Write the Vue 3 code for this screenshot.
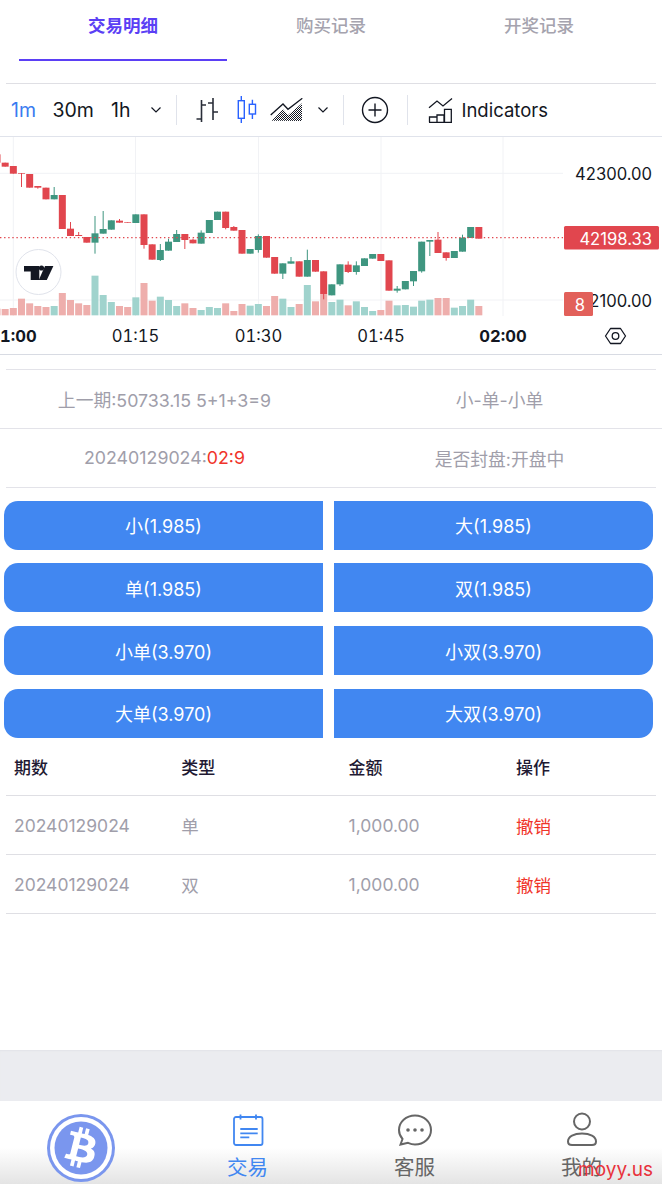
<script setup>
// candles: [colour, bodyTop, bodyBottom, wickTop, wickBottom, volumeTop] in 3x chart coords
const raw = [
  ['r', 55, 80, 55, 80, 518], ['r', 80, 92, 80, 92, 519], ['r', 90, 113, 90, 113, 516], ['r', 111, 113, 111, 153, 488],
  ['r', 114, 155, 114, 155, 502], ['r', 150, 155, 150, 158, 510], ['r', 155, 190, 155, 190, 513], ['g', 177, 190, 153, 190, 510],
  ['r', 177, 279, 177, 279, 471], ['r', 278, 300, 258, 300, 492], ['r', 297, 300, 288, 300, 502], ['r', 303, 320, 303, 320, 507],
  ['g', 292, 320, 240, 353, 419], ['g', 279, 293, 225, 293, 477], ['g', 253, 281, 253, 281, 498], ['r', 254, 260, 249, 260, 510],
  ['r', 258, 260, 258, 260, 513], ['g', 235, 261, 235, 261, 484], ['r', 235, 327, 235, 338, 441], ['r', 325, 371, 325, 371, 494],
  ['g', 342, 372, 324, 375, 482], ['g', 317, 344, 308, 344, 492], ['g', 294, 318, 282, 318, 510], ['r', 294, 312, 294, 339, 502],
  ['r', 311, 322, 308, 322, 516], ['g', 290, 323, 283, 323, 522], ['g', 252, 291, 252, 291, 513], ['g', 227, 252, 227, 252, 516],
  ['r', 227, 276, 227, 280, 502], ['r', 273, 284, 270, 284, 525], ['r', 282, 353, 282, 353, 504], ['g', 339, 353, 339, 353, 509],
  ['g', 300, 342, 295, 350, 504], ['r', 300, 365, 300, 365, 510], ['r', 363, 413, 363, 413, 480], ['g', 382, 413, 382, 429, 488],
  ['g', 376, 383, 363, 383, 513], ['r', 376, 422, 376, 422, 504], ['g', 372, 422, 341, 422, 447], ['r', 372, 407, 372, 407, 496],
  ['r', 406, 475, 406, 490, 476], ['g', 445, 478, 445, 478, 498], ['g', 385, 445, 385, 450, 491], ['r', 386, 408, 376, 411, 508],
  ['g', 388, 408, 376, 416, 496], ['g', 367, 390, 367, 390, 513], ['g', 354, 368, 354, 368, 525], ['r', 354, 375, 354, 375, 522],
  ['r', 373, 464, 373, 464, 494], ['g', 458, 464, 450, 470, 508], ['g', 435, 460, 435, 460, 507], ['g', 405, 436, 405, 450, 512],
  ['g', 317, 406, 317, 410, 494], ['g', 312, 317, 312, 360, 491], ['r', 311, 351, 288, 351, 486], ['r', 349, 366, 349, 374, 486],
  ['g', 345, 366, 345, 366, 515], ['g', 305, 347, 296, 347, 510], ['g', 273, 306, 273, 306, 491], ['r', 273, 308, 273, 308, 510],
]
const candles = raw.map((c, i) => ({
  x: -9 + 24.5 * i,
  color: c[0] === 'r' ? '#e1464e' : '#3f9680',
  vol: c[0] === 'r' ? '#eeaeac' : '#a0d3cd',
  top: c[1], bottom: c[2], wickTop: c[3], wickBottom: c[4], volTop: c[5],
}))
const gridX = [13.3, 135.5, 258.5, 381, 503]
const times = [
  { x: 13, t: '01:00', bold: true },
  { x: 135.5, t: '01:15' },
  { x: 258.5, t: '01:30' },
  { x: 381, t: '01:45' },
  { x: 503, t: '02:00', bold: true },
]
const tabs = ['交易明细', '购买记录', '开奖记录']
const buttons = ['小(1.985)', '大(1.985)', '单(1.985)', '双(1.985)', '小单(3.970)', '小双(3.970)', '大单(3.970)', '大双(3.970)']
const orders = [
  { no: '20240129024', type: '单', amount: '1,000.00' },
  { no: '20240129024', type: '双', amount: '1,000.00' },
]
</script>

<template>
  <div class="page">
    <div class="tabs">
      <div v-for="(t, i) in tabs" :key="t" class="tab" :class="{ active: i === 0 }">{{ t }}</div>
    </div>

    <div class="toolbar">
      <span class="tf blue t1">1m</span>
      <span class="tf t2">30m</span>
      <span class="tf t3">1h</span>
      <svg class="chev c1" width="12" height="8" viewBox="0 0 12 8"><path d="M1.5 1.5 6 6l4.5-4.5" fill="none" stroke="#131722" stroke-width="1.2" /></svg>
      <i class="sep s1"></i>
      <svg class="ico bar" width="24" height="26" viewBox="0 0 24 26" fill="none" stroke="#2a2e39" stroke-width="1.600">
        <path d="M6.500 3v22M1.500 22h5M6.500 8H11M18 1v22M13 6h5M18 15h5" />
      </svg>
      <svg class="ico candle" width="20" height="28" viewBox="0 0 20 28" fill="none" stroke="#2962ff" stroke-width="1.400">
        <path d="M4.300 0v27M15.400 3.700V23" />
        <rect x="1.300" y="4.700" width="6" height="17.600" fill="#fff" />
        <rect x="12.300" y="8.300" width="6.200" height="9.700" fill="#fff" />
      </svg>
      <svg class="ico area" width="34" height="24" viewBox="0 0 34 24">
        <defs>
          <pattern id="dots" width="2" height="2" patternUnits="userSpaceOnUse"><rect width="1" height="1" fill="#131722" /><rect x="1" y="1" width="1" height="1" fill="#131722" /></pattern>
        </defs>
        <path d="M1.700 22.700 13 11.300l5 5.700L32 5.300v17.700z" fill="url(#dots)" />
        <path d="M.7 17 13 6l5 5.300L32.300.3" fill="none" stroke="#131722" stroke-width="1.300" />
      </svg>
      <svg class="chev c2" width="12" height="8" viewBox="0 0 12 8"><path d="M1.500 1.500 6 6l4.500-4.500" fill="none" stroke="#131722" stroke-width="1.200" /></svg>
      <i class="sep s2"></i>
      <svg class="ico plus" width="28" height="28" viewBox="0 0 28 28" fill="none" stroke="#131722" stroke-width="1.400">
        <circle cx="14" cy="14" r="12.500" />
        <path d="M14 7.500v13M7.500 14h13" />
      </svg>
      <i class="sep s3"></i>
      <svg class="ico ind" width="25" height="25" viewBox="0 0 25 25" fill="none" stroke="#131722" stroke-width="1.300">
        <path d="M1 9.700 9 3l6 5 9-7.500" />
        <path d="M1.500 24.300V19h7.500v5.300M9 24.300V17h7v7.300M16.500 24.300V11.300h6.800v13M1 24.300h23" />
      </svg>
      <span class="tf ind-label">Indicators</span>
    </div>

    <svg class="chart" width="662" height="217" viewBox="0 1 662 217">
      <line v-for="x in gridX" :key="x" :x1="x" :x2="x" y1="0" y2="180" class="grid" />
      <line x1="0" x2="563" y1="37.300" y2="37.300" class="grid" />
      <line x1="0" x2="563" y1="164" y2="164" class="grid" />
      <g transform="scale(0.33333)">
        <g v-for="c in candles" :key="c.x">
          <rect :x="c.x - 10.5" :y="c.volTop" width="21" :height="538 - c.volTop" :fill="c.vol" />
          <rect :x="c.x - 1.5" :y="c.wickTop" width="3" :height="c.wickBottom - c.wickTop" :fill="c.color" />
          <rect :x="c.x - 10.5" :y="c.top" width="21" :height="c.bottom - c.top" :fill="c.color" />
        </g>
      </g>
      <line x1="0" x2="563" y1="101.700" y2="101.700" stroke="#e1464e" stroke-width="1.200" stroke-dasharray="1.400 2.700" />

      <circle cx="38.500" cy="136" r="22.500" fill="#fff" stroke="#e0e3eb" stroke-width="1" />
      <path d="M24 130h15.300v14h-8.600v-8.600H24z" fill="#131722" />
      <circle cx="41.500" cy="132" r="2.600" fill="#131722" />
      <path d="M45 130h8.400l-6.600 14h-8z" fill="#131722" />

      <text x="652" y="37.500" text-anchor="end" dominant-baseline="central" class="axis">42300.00</text>
      <text x="652" y="164.500" text-anchor="end" dominant-baseline="central" class="axis">42100.00</text>
      <rect x="564" y="90" width="95" height="23.500" rx="1.500" fill="#e1464e" />
      <text x="652" y="102.500" text-anchor="end" dominant-baseline="central" class="axis light">42198.33</text>
      <rect x="564" y="156" width="29" height="24" rx="1.500" fill="#e2605a" />
      <text x="580" y="168.500" text-anchor="middle" dominant-baseline="central" class="axis light">8</text>

      <text v-for="t in times" :key="t.t" :x="t.x" y="200" text-anchor="middle" dominant-baseline="central" class="axis time" :class="{ bold: t.bold }">{{ t.t }}</text>
      <path d="M605.500 200 610.500 192.500h10l5 7.500-5 7.500h-10z" fill="none" stroke="#131722" stroke-width="1.300" stroke-linejoin="round" />
      <circle cx="615.500" cy="200" r="3.300" fill="none" stroke="#131722" stroke-width="1.300" />
    </svg>

    <div class="rule inset first"></div>
    <div class="info">
      <div>上一期:50733.15 5+1+3=9</div>
      <div>小-单-小单</div>
    </div>
    <div class="rule"></div>
    <div class="info">
      <div>20240129024:<span class="red">02:9</span></div>
      <div>是否封盘:开盘中</div>
    </div>
    <div class="rule inset"></div>

    <div class="buttons">
      <button v-for="b in buttons" :key="b" class="bet">{{ b }}</button>
    </div>

    <div class="row head">
      <div>期数</div><div>类型</div><div>金额</div><div>操作</div>
    </div>
    <div v-for="(o, i) in orders" :key="i" class="row">
      <div>{{ o.no }}</div><div>{{ o.type }}</div><div>{{ o.amount }}</div><div class="red">撤销</div>
    </div>

    <div class="spacer"></div>
    <div class="gap"></div>

    <div class="tabbar">
      <div class="item">
        <svg class="coin" width="68" height="68" viewBox="0 0 68 68">
          <circle cx="34" cy="34" r="34" fill="#7a96ee" />
          <circle cx="34" cy="34" r="31" fill="#fff" />
          <circle cx="34" cy="34" r="26.500" fill="#7a96ee" />
          <g transform="translate(34 34) scale(1.02) translate(-32 -32)">
            <path fill="#fff" d="M46.103 27.444c.637-4.258-2.605-6.547-7.038-8.074l1.438-5.768-3.511-.875-1.4 5.616c-.923-.23-1.871-.447-2.813-.662l1.41-5.653-3.509-.875-1.439 5.766c-.764-.174-1.514-.346-2.242-.527l.004-.018-4.842-1.209-.934 3.75s2.605.597 2.55.634c1.422.355 1.679 1.296 1.636 2.042l-1.638 6.571c.098.025.225.061.365.117l-.371-.092-2.296 9.205c-.174.432-.615 1.08-1.609.834.035.051-2.552-.637-2.552-.637l-1.743 4.019 4.569 1.139c.85.213 1.683.436 2.503.646l-1.453 5.834 3.507.875 1.439-5.772c.958.26 1.888.5 2.798.726l-1.434 5.745 3.511.875 1.453-5.823c5.987 1.133 10.489.676 12.384-4.739 1.527-4.36-.076-6.875-3.226-8.515 2.294-.529 4.022-2.038 4.483-5.155zM38.08 38.693c-1.085 4.36-8.426 2.003-10.806 1.412l1.928-7.729c2.38.594 10.012 1.77 8.878 6.317zm1.086-11.312c-.99 3.966-7.1 1.951-9.082 1.457l1.748-7.01c1.982.494 8.365 1.416 7.334 5.553z" />
          </g>
        </svg>
      </div>
      <div class="item on">
        <svg width="32" height="32" viewBox="0 0 32 32" fill="none" stroke="#4187f1" stroke-width="1.800">
          <rect x="2" y="3" width="28.500" height="28" rx="2" />
          <path d="M8.500 .5v5M24 .5v5M8.300 15h17.400M8.300 19.300h17.400M8.300 23.300h9" />
        </svg>
        <span>交易</span>
      </div>
      <div class="item">
        <svg width="36" height="32" viewBox="0 0 36 32" fill="none" stroke="#666" stroke-width="2">
          <path d="M18 1.500C9 1.500 2 8 2 16c0 3.500 1.300 6.500 3.500 9L3.500 30.500l7.500-1.700c2 .9 4.500 1.700 7 1.700 9 0 16-6.500 16-14.500S27 1.500 18 1.500z" />
          <circle cx="11" cy="16" r="1.800" fill="#666" stroke="none" />
          <circle cx="18" cy="16" r="1.800" fill="#666" stroke="none" />
          <circle cx="25" cy="16" r="1.800" fill="#666" stroke="none" />
        </svg>
        <span>客服</span>
      </div>
      <div class="item">
        <svg class="user" width="32" height="34" viewBox="0 0 32 34" fill="none" stroke="#666" stroke-width="2">
          <ellipse cx="16" cy="9.500" rx="8" ry="8" />
          <path d="M6 33h20c2.500 0 4-1.500 4-3.500 0-5-6-8-14-8s-14 3-14 8C2 31.500 3.500 33 6 33z" />
        </svg>
        <span>我的</span>
      </div>
    </div>
    <div class="mark">moyy.us</div>
  </div>
</template>

<style scoped>
.page {
  position: relative;
  width: 662px;
  height: 1184px;
  overflow: hidden;
  background: #fff;
  font-family: Inter, "Noto Sans CJK SC", sans-serif;
}
.tabs {
  display: flex;
  height: 84px;
  padding: 0 19px;
  box-sizing: border-box;
  position: relative;
}
.tabs::after {
  content: "";
  position: absolute;
  left: 6px;
  right: 6px;
  bottom: 0;
  height: 1px;
  background: #dfdfe4;
}
.tab {
  width: 208.500px;
  height: 61px;
  box-sizing: border-box;
  padding-top: 14px;
  text-align: center;
  font-size: 17.500px;
  line-height: 24px;
  font-weight: 500;
  color: #a5a3ae;
}
.tab.active {
  color: #5b3ff5;
  font-weight: 700;
  border-bottom: 2.500px solid #5b3ff5;
}
.toolbar {
  display: flex;
  align-items: center;
  height: 52px;
  color: #131722;
}
.tf {
  font-size: 19.500px;
  white-space: nowrap;
}
.blue {
  color: #3a7bf0;
}
.t1 { margin-left: 11px; }
.t2 { margin-left: 16.500px; }
.t3 { margin-left: 17px; }
.chev { flex: none; }
.c1 { margin-left: 20px; }
.sep {
  flex: none;
  width: 1px;
  height: 30px;
  background: #e0e3eb;
}
.s1 { margin-left: 14px; }
.ico { flex: none; }
.bar { margin-left: 18px; }
.candle { margin-left: 18px; }
.area { margin-left: 13px; }
.c2 { margin-left: 13px; }
.s2 { margin-left: 14px; }
.plus { margin-left: 16.500px; }
.s3 { margin-left: 18.500px; }
.ind { margin-left: 20px; }
.ind-label { margin-left: 8px; font-size: 18.500px; }
.chart {
  display: block;
  border-top: 1px solid #e0e3eb;
  border-bottom: 1px solid #d8dbe3;
  background: #fff;
}
.grid {
  stroke: #f1f2f5;
  stroke-width: 1;
}
.axis {
  font-family: Inter, sans-serif;
  font-size: 16.600px;
  fill: #131722;
}
.axis.light {
  fill: #fff;
}
.axis.time {
  font-variant-numeric: tabular-nums;
}
.axis.bold {
  font-weight: 700;
}
.rule {
  height: 1.500px;
  background: #e3e3e9;
}
.rule.inset {
  margin: 0 6px;
}
.rule.first {
  margin-top: 14px;
  height: 1px;
}
.info {
  display: grid;
  grid-template-columns: 323px 339px;
  align-items: center;
  height: 57.500px;
  text-align: center;
  font-size: 17.800px;
  color: #a09eaa;
}
.info div:first-child {
  padding-left: 6px;
}
.info div:last-child {
  padding-left: 14px;
}
.red {
  color: #f0342a;
}
.buttons {
  display: grid;
  grid-template-columns: 319px 319px;
  column-gap: 11px;
  row-gap: 13.800px;
  padding: 12.500px 0 0 4px;
}
.bet {
  height: 49px;
  border: none;
  padding: 0;
  background: #4187f1;
  color: #fff;
  font-family: inherit;
  font-size: 18px;
}
.bet:nth-child(odd) {
  border-radius: 14px 0 0 14px;
}
.bet:nth-child(even) {
  border-radius: 0 14px 14px 0;
}
.row {
  display: grid;
  grid-template-columns: 167.300px 167.300px 167.300px 1fr;
  align-items: center;
  height: 58px;
  margin: 0 6px;
  padding-left: 8px;
  font-size: 17.500px;
  color: #a09eaa;
  border-bottom: 1px solid #dfdfe4;
}
.row.head {
  height: 57.500px;
  font-size: 17px;
  font-weight: 500;
  color: #1f1a33;
}
.spacer {
  height: 136px;
}
.gap {
  height: 51px;
  background: #ebecf0;
  box-shadow: inset 0 2px 2px -1px #e2e3e8;
}
.tabbar {
  display: grid;
  grid-template-columns: repeat(4, 167px);
  height: 83px;
  margin-left: -3px;
  background: linear-gradient(#fff 46%, #fff 56%, #e4e4e4 100%);
}
.item {
  display: flex;
  flex-direction: column;
  align-items: center;
  padding-top: 13px;
  font-size: 20.500px;
  line-height: 28px;
  color: #666;
}
.item svg {
  flex: none;
}
.item .user {
  margin-top: -2px;
}
.item span {
  margin-top: 8px;
}
.item.on {
  color: #4187f1;
}
.mark {
  position: absolute;
  right: 9px;
  bottom: 0;
  font-size: 19px;
  line-height: 28px;
  color: #e8323c;
}
</style>

<style>
html, body { background: #fff; }
</style>
